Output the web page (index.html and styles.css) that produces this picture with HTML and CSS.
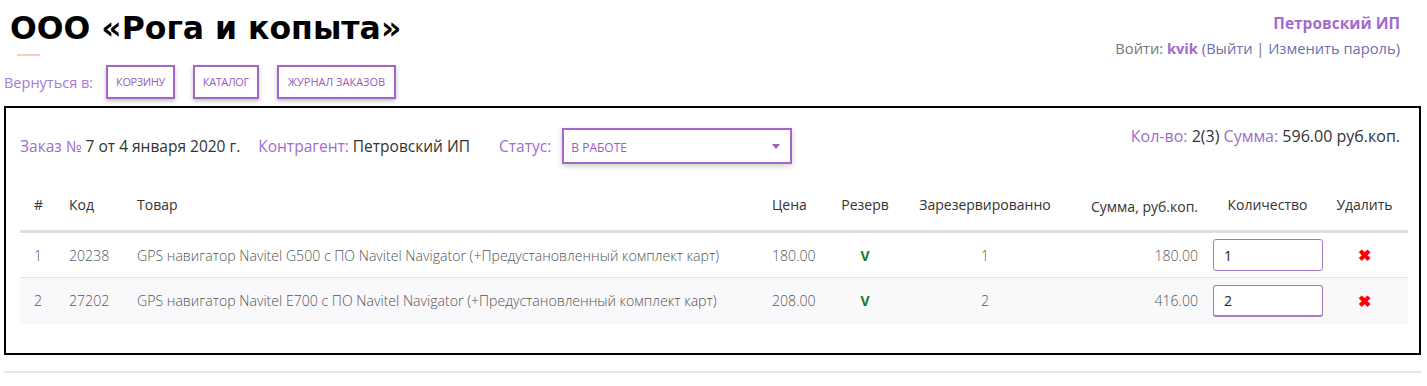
FILE: index.html
```html
<!DOCTYPE html>
<html lang="ru">
<head>
    <meta charset="UTF-8">
    <title>Заказ № 7 - ООО «Рога и копыта»</title>
    <link rel="stylesheet" href="styles.css">
</head>
<body>
    <header class="top">
        <div class="brand">
            <h1 class="brand-title">ООО «Рога и копыта»</h1>
            <div class="brand-line"></div>
            <nav class="back-nav">
                <span class="back-label">Вернуться в:</span>
                <a class="nav-btn" href="#">Корзину</a>
                <a class="nav-btn" href="#">Каталог</a>
                <a class="nav-btn" href="#">Журнал заказов</a>
            </nav>
        </div>
        <div class="user">
            <div class="user-company">Петровский ИП</div>
            <div class="user-login">
                Войти: <b class="user-name">kvik</b>
                <a href="#" class="user-link">(Выйти</a> | <a href="#" class="user-link">Изменить пароль)</a>
            </div>
        </div>
    </header>

    <div class="order">
        <div class="order-head">
            <div class="order-info">
                <span><span class="lbl">Заказ №</span> 7 от 4 января 2020 г.</span>
                <span class="info-gap"><span class="lbl">Контрагент:</span> Петровский ИП</span>
                <span class="lbl lbl-status">Статус:</span>
                <div class="status-select">
                    <span>В работе</span>
                    <span class="caret"></span>
                </div>
            </div>
            <div class="order-total">
                <span class="lbl">Кол-во:</span> 2(3)
                <span class="lbl">Сумма:</span> 596.00 руб.коп.
            </div>
        </div>

        <table class="items">
            <colgroup>
                <col style="width: 35px">
                <col style="width: 68px">
                <col style="width: 635px">
                <col style="width: 70px">
                <col style="width: 74px">
                <col style="width: 166px">
                <col style="width: 138px">
                <col style="width: 123px">
                <col style="width: 79px">
            </colgroup>
            <thead>
                <tr>
                    <th>#</th>
                    <th>Код</th>
                    <th>Товар</th>
                    <th>Цена</th>
                    <th class="c">Резерв</th>
                    <th class="c">Зарезервированно</th>
                    <th class="r">Сумма, руб.коп.</th>
                    <th class="c">Количество</th>
                    <th class="c del-col">Удалить</th>
                </tr>
            </thead>
            <tbody>
                <tr>
                    <td>1</td>
                    <td>20238</td>
                    <td>GPS навигатор Navitel G500 с ПО Navitel Navigator (+Предустановленный комплект карт)</td>
                    <td>180.00</td>
                    <td class="c"><span class="ok">V</span></td>
                    <td class="c">1</td>
                    <td class="r">180.00</td>
                    <td class="qty"><input class="qty-input" type="text" value="1"></td>
                    <td class="c del-col"><span class="del">✖</span></td>
                </tr>
                <tr>
                    <td>2</td>
                    <td>27202</td>
                    <td>GPS навигатор Navitel E700 с ПО Navitel Navigator (+Предустановленный комплект карт)</td>
                    <td>208.00</td>
                    <td class="c"><span class="ok">V</span></td>
                    <td class="c">2</td>
                    <td class="r">416.00</td>
                    <td class="qty"><input class="qty-input" type="text" value="2"></td>
                    <td class="c del-col"><span class="del">✖</span></td>
                </tr>
            </tbody>
        </table>
    </div>

    <hr class="foot-line">
</body>
</html>
```

FILE: styles.css
```css
* {
    margin: 0;
    padding: 0;
    box-sizing: border-box;
}

body {
    font-family: 'Open Sans', 'Noto Sans', sans-serif;
    color: #333;
    background: #fff;
    padding: 0 6px 0 4px;
}

a {
    text-decoration: none;
}

.top {
    display: flex;
    justify-content: space-between;
    align-items: flex-start;
}

.brand-title {
    font-family: 'DejaVu Sans', Verdana, sans-serif;
    font-size: 31.5px;
    font-weight: 700;
    color: #000;
    line-height: 36px;
    margin: 10px 0 0 6px;
}

.brand-line {
    width: 23px;
    height: 2px;
    margin: 8px 0 0 13px;
    background: #f6cfc0;
}

.back-nav {
    display: flex;
    align-items: center;
    gap: 18px;
    margin-top: 9px;
}

.back-label {
    font-size: 14.5px;
    color: #a27cd6;
    margin-right: -5px;
}

.nav-btn {
    display: inline-block;
    height: 34px;
    line-height: 30px;
    padding: 0 8px;
    border: 2px solid #a566c9;
    font-size: 11px;
    text-transform: uppercase;
    color: #9a5bbd;
    box-shadow: 0 2px 4px rgba(0, 0, 0, 0.25);
    letter-spacing: -0.4px;
}

.nav-btn:last-child {
    letter-spacing: 0;
    padding: 0 9px;
}

.user {
    text-align: right;
    padding: 13px 21px 0 0;
}

.user-company {
    font-size: 15.5px;
    font-weight: 700;
    color: #a36ad0;
    line-height: 20px;
}

.user-login {
    font-size: 14.7px;
    color: #777;
    margin-top: 5px;
}

.user-name {
    color: #a36ad0;
}

.user-link {
    color: #6b6fb3;
}

.order {
    border: 2px solid #000;
    margin-top: 7px;
    padding: 20px 13px 29px 14px;
}

.order-head {
    display: flex;
    justify-content: space-between;
    align-items: flex-start;
}

.order-info {
    display: flex;
    align-items: center;
    font-size: 15.5px;
    color: #333;
    white-space: nowrap;
}

.lbl {
    color: #a06ccf;
}

.info-gap {
    margin-left: 18px;
}

.lbl-status {
    margin-left: 29px;
    margin-right: 11px;
}

.status-select {
    width: 230px;
    height: 36px;
    border: 2px solid #a566c9;
    box-shadow: 0 2px 6px rgba(0, 0, 0, 0.2);
    display: flex;
    align-items: center;
    justify-content: space-between;
    padding: 2px 10px 0 7px;
    font-size: 12px;
    text-transform: uppercase;
    color: #9a5bbd;
}

.caret {
    width: 0;
    height: 0;
    border-left: 4px solid transparent;
    border-right: 4px solid transparent;
    border-top: 5px solid #9a5bbd;
    margin-bottom: 2px;
}

.order-total {
    font-size: 16px;
    color: #333;
    margin: 0 6px 0 0;
    line-height: 20px;
    position: relative;
    top: -2px;
}

.items {
    width: 1388px;
    border-collapse: collapse;
    table-layout: fixed;
    margin-top: 19px;
    font-size: 13px;
}

.items th {
    font-weight: 400;
    text-align: left;
    color: #333;
    font-size: 14px;
    padding: 12px 0 16px 14px;
    border-bottom: 3px solid #dedfe1;
    white-space: nowrap;
}

.items td {
    color: #555;
    font-weight: 300;
    font-size: 14.1px;
    padding: 0 0 0 14px;
    height: 46px;
    border-bottom: 1px solid #e3e3e6;
    white-space: nowrap;
}

.items tbody tr:nth-child(2) td {
    background: #f9f8fb;
    border-bottom: none;
}

.items .c {
    text-align: center;
    padding-left: 0;
}

.items .r {
    text-align: right;
    padding: 0 8px 0 0;
}

.items .del-col {
    padding-right: 8px;
}

.items .qty {
    padding-left: 7px;
}

.qty-input {
    width: 110px;
    height: 32px;
    border: 1px solid #a679c4;
    border-radius: 3px;
    padding: 0 10px;
    font-family: inherit;
    font-size: 14px;
    color: #222;
    background: #fff;
}

.items tbody tr:nth-child(2) .qty-input {
    border-bottom: 2px solid #a679c4;
}

.ok {
    font-weight: 700;
    color: #1b7a1f;
    font-size: 14px;
}

.del {
    color: #f00;
    font-size: 16px;
    font-weight: 700;
}

.foot-line {
    border: none;
    border-top: 2px solid #e7e7e7;
    margin-top: 16px;
}
```
